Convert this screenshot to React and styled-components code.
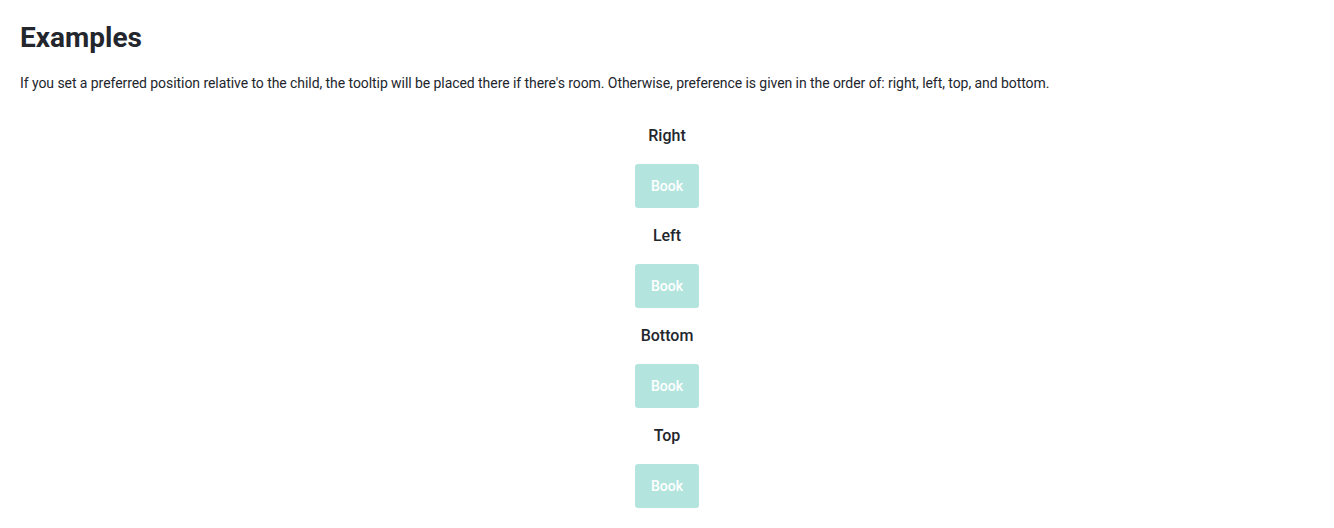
import React from "react";
import styled, { createGlobalStyle } from "styled-components";

const GlobalStyle = createGlobalStyle`
  body {
    margin: 0;
    background: #fff;
    font-family: Roboto, "Liberation Sans", sans-serif;
    color: #23262d;
  }
`;

const Page = styled.div`
  padding: 20px;
`;

const Title = styled.h1`
  margin: 0 0 17px;
  font-size: 28px;
  line-height: 36px;
  font-weight: 700;
`;

const Intro = styled.p`
  margin: 0 0 30px;
  font-size: 14px;
  line-height: 20px;
  letter-spacing: -0.065px;
`;

const List = styled.div`
  display: flex;
  flex-direction: column;
  align-items: center;
`;

const Item = styled.div`
  display: flex;
  flex-direction: column;
  align-items: center;
  margin-bottom: 15px;
`;

const Label = styled.div`
  font-size: 16px;
  line-height: 24px;
  font-weight: 500;
  margin: 1px 0 16px;
`;

const Button = styled.button`
  width: 64px;
  height: 44px;
  border: none;
  border-radius: 3px;
  background: #b3e5de;
  color: #fff;
  font-family: inherit;
  font-size: 14px;
  font-weight: 500;
  padding: 0;
  cursor: not-allowed;
`;

const positions = ["Right", "Left", "Bottom", "Top"];

export default function App() {
  return (
    <Page>
      <GlobalStyle />
      <Title>Examples</Title>
      <Intro>
        If you set a preferred position relative to the child, the tooltip will be placed there if
        there's room. Otherwise, preference is given in the order of: right, left, top, and bottom.
      </Intro>
      <List>
        {positions.map((p) => (
          <Item key={p}>
            <Label>{p}</Label>
            <Button>Book</Button>
          </Item>
        ))}
      </List>
    </Page>
  );
}
